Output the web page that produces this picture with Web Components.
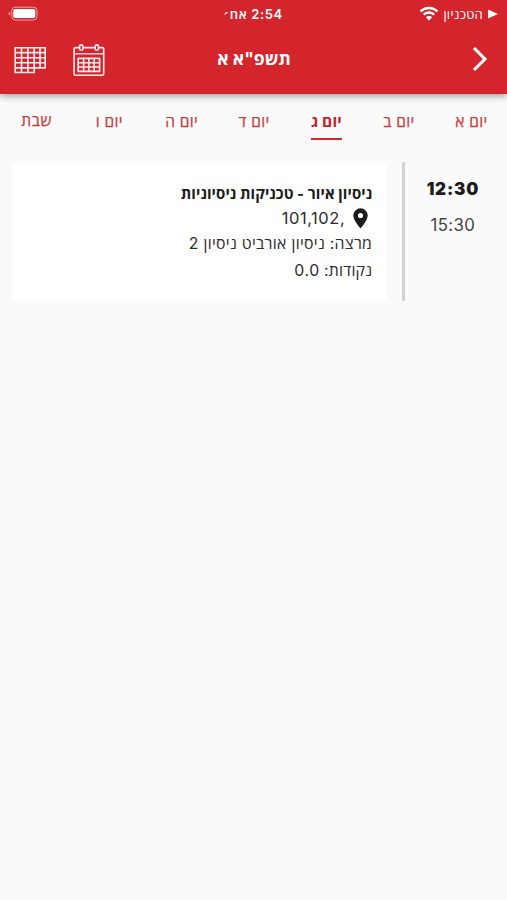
<!DOCTYPE html>
<html lang="he" dir="rtl">
<head>
<meta charset="utf-8">
<title>תשפ"א א</title>
<style>
html,body{margin:0;height:100%;background:#fafafa}
body{font-family:Inter,"Open Sans","Noto Sans","DejaVu Sans",sans-serif;color:#222;overflow:hidden}
</style>
</head>
<body>
<schedule-app></schedule-app>
<script>
const define=(name,html,setup)=>customElements.define(name,class extends HTMLElement{
  constructor(){super();this.attachShadow({mode:'open'}).innerHTML=html;}
  connectedCallback(){if(setup)setup(this,this.shadowRoot);}
});

define('wifi-icon',`<style>:host{display:block;width:20px;height:16px}svg{display:block}</style>
<svg width="20" height="16" viewBox="0 0 20 16" fill="none" stroke="#fff" stroke-width="2.5"><path d="M1.6 5.4a12 12 0 0 1 16.8 0M4.7 8.7a7.6 7.6 0 0 1 10.6 0"/><path fill="#fff" stroke="none" d="M6.8 11.3a4.6 4.6 0 0 1 6.4 0L10 14.4z"/></svg>`);

define('battery-icon',`<style>:host{display:block}svg{display:block}</style>
<svg width="32" height="16" viewBox="0 0 32 16"><rect x="3.8" y="1.2" width="25.2" height="12.8" rx="3.6" fill="none" stroke="#f2a3a7"/><rect x="5.3" y="3.1" width="22" height="9" rx="1.8" fill="#fff"/><path d="M2.2 5.8v3.8q-1.7-.5-1.7-1.9t1.7-1.9z" fill="#f2a3a7"/></svg>`);

define('grid-icon',`<style>:host{display:block}svg{display:block}</style>
<svg width="33" height="28" viewBox="0 0 33 28" fill="none" stroke="#ffecec" stroke-width="1.6"><path d="M1.2 1.7h30v20.2H20.2v4.6h-19zM1.2 6.6h30M1.2 11.7h30M1.2 16.8h30M1.2 21.9h19M7.5 1.7v24.8M13.9 1.7v24.8M20.2 1.7v20.2M26 1.7v20.2"/></svg>`);

define('calendar-icon',`<style>:host{display:block}svg{display:block}</style>
<svg width="32" height="33" viewBox="0 0 32 33" fill="none" stroke="#ffecec" stroke-width="1.6"><rect x="1.1" y="3.6" width="29.6" height="27.6" rx="1.5"/><path d="M1 9.8h30" stroke-width="1.3"/><path d="M5.2 14.4h21.4v13H5.2zM5.2 18.7h21.4M5.2 23h21.4M10.6 14.4v13M15.9 14.4v13M21.2 14.4v13"/><rect x="6.6" y=".9" width="3.3" height="5.4" rx="1.6" fill="#d4242c"/><rect x="22.2" y=".9" width="3.3" height="5.4" rx="1.6" fill="#d4242c"/></svg>`);

define('pin-icon',`<style>:host{display:block}svg{display:block}</style>
<svg width="15" height="21" viewBox="0 0 15 21"><path fill="#1c1c1c" fill-rule="evenodd" d="M7.5.3A7.2 7.2 0 0 0 .3 7.5c0 5.1 7.2 12.9 7.2 12.9s7.2-7.8 7.2-12.9A7.2 7.2 0 0 0 7.5.3zm0 4.6a2.6 2.6 0 1 1 0 5.2 2.6 2.6 0 0 1 0-5.2z"/></svg>`);

define('status-bar',`<style>
:host{display:grid;grid-template-columns:1fr auto 1fr;align-items:center;height:28px;padding:0 9px 0 8px;direction:rtl}
.net{display:flex;align-items:center;gap:4px;font-size:13px;line-height:18px}
.net span{letter-spacing:.25px}
.time{font-size:13px;font-weight:600;letter-spacing:.6px;line-height:18px;padding-bottom:1px}
.tri{width:10px;height:9px;margin-inline-end:1px;background:#fff;clip-path:polygon(0 0,100% 50%,0 100%)}
battery-icon{justify-self:end}
</style><div class="net"><i class="tri"></i><span>הטכניון</span><wifi-icon></wifi-icon></div><span class="time">2:54 אח׳</span><battery-icon></battery-icon>`);

define('nav-bar',`<style>
:host{display:grid;grid-template-columns:1fr auto 1fr;align-items:center;height:65px;box-sizing:border-box;padding:0 17px 0 14px}
h1{margin:0 0 0 -1px;font-size:17.6px;line-height:24px;font-weight:700;padding-bottom:4px;position:relative;right:-2.5px}
.back{display:block;margin-bottom:3px}
.actions{display:flex;gap:26px;justify-self:end;align-items:center;margin-bottom:1px}
</style><svg class="back" width="18" height="26" viewBox="0 0 18 26" fill="none" stroke="#fff" stroke-width="3"><path d="M2 2l11 11L2 24"/></svg><h1><slot></slot></h1><div class="actions"><calendar-icon></calendar-icon><grid-icon></grid-icon></div>`);

define('app-header',`<style>:host{display:block;height:93.5px;background:#d4242c;color:#fff;box-shadow:0 2px 7px rgba(0,0,0,.38);position:relative}</style><status-bar></status-bar><nav-bar><slot></slot></nav-bar>`);

define('day-tab',`<style>
:host{display:flex;flex:1;justify-content:center;color:#c93a40;font-size:15.5px;line-height:22px;letter-spacing:.3px;-webkit-text-stroke:.25px #c93a40}
span{height:26.5px;padding-top:1px;border-bottom:3px solid transparent;white-space:nowrap}
:host([active]){color:#c5202b;font-weight:700;letter-spacing:.15px;-webkit-text-stroke:0}
:host([active]) span{border-image:linear-gradient(#ce2b34,#ce2b34) 1;border-bottom-color:#ce2b34;border-bottom-width:2.5px}
:host([last]){margin-top:-1px;letter-spacing:.7px}
</style><span><slot></slot></span>`);

define('day-tabs',`<style>:host{display:flex;padding-top:16.5px;height:53px;box-sizing:border-box;margin-left:.5px;margin-right:-.5px}</style><slot></slot>`);

define('lesson-card',`<style>
:host{display:block;box-sizing:border-box;width:376px;height:138px;background:#fff;border-radius:6px;padding:19px 15px 0}
h2{margin:0;font-size:15px;font-weight:700;line-height:24px;color:#1c1c1c;letter-spacing:.08px}
p{margin:0;font-size:15.8px;line-height:26.5px;color:#2c2c2c;letter-spacing:.3px}
.place{display:flex;align-items:center;gap:8px;height:25px;padding-right:4px;font-size:16.5px;letter-spacing:.55px}
.points{padding-top:1px;letter-spacing:.2px}
</style><h2><slot name="title"></slot></h2><p class="place"><pin-icon></pin-icon><slot name="place"></slot></p><p><slot name="teacher"></slot></p><p class="points"><slot name="points"></slot></p>`);

define('lesson-row',`<style>
:host{display:flex;align-items:center;padding-left:12px;margin-top:15.5px;height:139px}
.times{width:102.5px;box-sizing:border-box;height:100%;display:flex;flex-direction:column;align-items:center;padding-top:14px;padding-right:6px}
.start{font-size:17px;font-weight:900;line-height:26px;color:#1c1c1c;letter-spacing:.8px}
.end{font-size:16.8px;line-height:24px;margin-top:11px;color:#444;letter-spacing:.4px}
.line{width:3px;height:139px;background:#d2d2d2;border-radius:1px;margin-left:14.5px}
</style><div class="times"><span class="start"></span><span class="end"></span></div><div class="line"></div><slot></slot>`,(el,root)=>{
  root.querySelector('.start').textContent=el.getAttribute('start');
  root.querySelector('.end').textContent=el.getAttribute('end');
});

define('schedule-app',`<style>:host{display:block;height:900px;background:#fafafa}</style>
<app-header>תשפ"א א</app-header>
<day-tabs><day-tab>יום א</day-tab><day-tab>יום ב</day-tab><day-tab active>יום ג</day-tab><day-tab>יום ד</day-tab><day-tab>יום ה</day-tab><day-tab>יום ו</day-tab><day-tab last>שבת</day-tab></day-tabs>
<lesson-row start="12:30" end="15:30"><lesson-card><span slot="title">ניסיון איור - טכניקות ניסיוניות</span><span slot="place">,101,102</span><span slot="teacher">מרצה: ניסיון אורביט ניסיון 2</span><span slot="points">נקודות: 0.0</span></lesson-card></lesson-row>`);
</script>
</body>
</html>
